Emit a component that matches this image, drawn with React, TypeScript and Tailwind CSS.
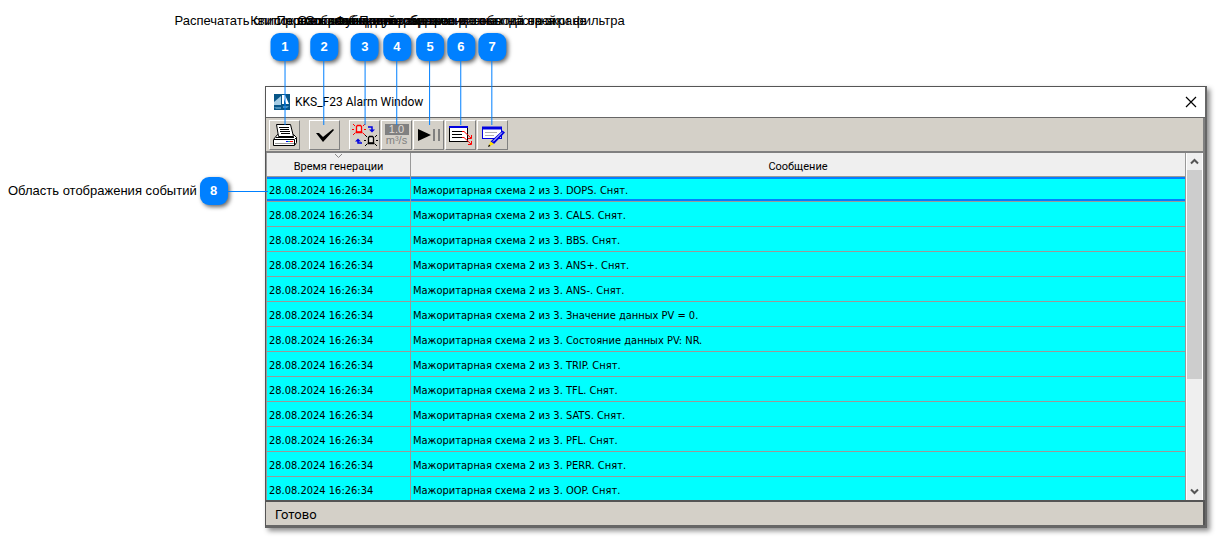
import type { ReactNode } from "react";

const messages = [
  "DOPS. Снят.",
  "CALS. Снят.",
  "BBS. Снят.",
  "ANS+. Снят.",
  "ANS-. Снят.",
  "Значение данных PV = 0.",
  "Состояние данных PV: NR.",
  "TRIP. Снят.",
  "TFL. Снят.",
  "SATS. Снят.",
  "PFL. Снят.",
  "PERR. Снят.",
  "OOP. Снят.",
];

const callouts = [
  { n: 1, place: "left-[285px]", text: "Распечатать список всех сообщений" },
  { n: 2, place: "left-[324px]", text: "Квитировать сообщение" },
  { n: 3, place: "left-[365px]", text: "Переключение звука сигнала" },
  { n: 4, place: "left-[397px]", text: "Отображение параметров в окне" },
  { n: 5, place: "left-[430px]", text: "Остановка и возобновление вывода окна" },
  { n: 6, place: "left-[461px]", text: "Функция отображения событий на экране" },
  { n: 7, place: "left-[492px]", text: "Подтверждение данных настройки фильтра" },
];

function Badge({ n }: { n: number }) {
  return (
    <span className="flex size-7 shrink-0 items-center justify-center rounded-[9px] bg-[#0080ff] text-[13px] font-bold text-white shadow-[2px_2px_4px_rgba(0,0,0,0.6)]">
      {n}
    </span>
  );
}

function ToolButton({ label, children }: { label: string; children: ReactNode }) {
  return (
    <button
      type="button"
      aria-label={label}
      className="flex h-[30px] w-[31px] items-center justify-center border border-t-white border-r-[#808080] border-b-[#808080] border-l-white bg-[#d4d0c8]"
    >
      {children}
    </button>
  );
}

function PrinterIcon() {
  return (
    <svg width="26" height="26" viewBox="0 0 26 26">
      <path d="M5.500 12.500L1.500 17.500V23.500H22.500L24.500 20.500V15.500L21.500 12.500Z" fill="#fff" stroke="#000" />
      <path d="M4.500 2.500H18.500L21.500 14.500H6.500Z" fill="#fff" stroke="#000" />
      <path d="M7 5.500H17M8 7.500H17M8 9.500H18M9 11.500H18" stroke="#000" />
      <path d="M2 17.500H22.500L24.500 15.500M22.500 18V23M4 15.500H22" stroke="#000" fill="none" />
      <path d="M3 21.500H22" stroke="#999" />
      <path d="M14 19.500H16" stroke="#0000ff" />
      <path d="M16 19.500H18" stroke="#00a0a0" />
      <path d="M18 19.500H21" stroke="#ff0000" />
    </svg>
  );
}

function CheckIcon() {
  return (
    <svg width="22" height="22" viewBox="0 0 22 22">
      <path d="M2 9L5 9L9 13L19 5L20 6L9 18Z" fill="#000" />
    </svg>
  );
}

function Beacon({ color }: { color: string }) {
  return (
    <g stroke={color} fill="none">
      <path d="M5.500 2.500H8.500L9.500 3.500V9H4.500V3.500Z" fill="#e4e0d8" strokeWidth="1.300" />
      <path d="M3.500 9.500H10.500" strokeWidth="1.500" />
      <path d="M0 6.500H2M12 6.500H14M1 1L3 3M13 1L11 3M1 12L3 10M13 12L11 10" />
    </g>
  );
}

function SwitchIcon() {
  return (
    <svg width="26" height="26" viewBox="0 0 26 26">
      <g transform="translate(0 1)"><Beacon color="#ff0000" /></g>
      <g transform="translate(12 12)"><Beacon color="#000000" /></g>
      <path d="M16 5H20V8" fill="none" stroke="#0000e0" strokeWidth="1.500" />
      <path d="M17 7.500H23L20 10.500Z" fill="#0000e0" />
      <path d="M10 21H6V19" fill="none" stroke="#0000e0" strokeWidth="1.500" />
      <path d="M3 19.500H9L6 16.500Z" fill="#0000e0" />
    </svg>
  );
}

function UnitsIcon() {
  return (
    <span className="flex w-6 flex-col items-center font-['Liberation_Sans',sans-serif] text-[11px] leading-[11px] text-[#808080]">
      <span className="w-full bg-[#808080] text-center text-[#e0ddd6]">1.0</span>
      <span>m³/s</span>
    </span>
  );
}

function PlayPauseIcon() {
  return (
    <svg width="26" height="22" viewBox="0 0 26 22">
      <path d="M2 5L15 11L2 17Z" fill="#000" />
      <path d="M18 5V17M23 5V17" stroke="#808080" strokeWidth="2" />
    </svg>
  );
}

function ListArrowsIcon() {
  return (
    <svg width="26" height="24" viewBox="0 0 26 24">
      <rect x="1.500" y="3.500" width="18" height="15" fill="#fff" stroke="#000" />
      <path d="M1 4H20" stroke="#0000e0" strokeWidth="2" />
      <path d="M4 8.500H14M4 11.500H14M4 14.500H14" stroke="#000" />
      <path d="M14 8.500H16L23 15M23.500 12V15.500H20M14 14.500H16L23 21M23.500 18V21.500H20" stroke="#ff0000" fill="none" />
    </svg>
  );
}

function EditIcon() {
  return (
    <svg width="26" height="24" viewBox="0 0 26 24">
      <rect x="2.500" y="4.500" width="19" height="11" fill="#fff" stroke="#0000e0" />
      <path d="M2 5H22" stroke="#0000e0" strokeWidth="3" />
      <path d="M5 9.500H17M5 12.500H14" stroke="#b0b0b0" />
      <path d="M22.500 7.500L25 9.500L14 21L10.500 18.500Z" fill="#0000e0" />
      <path d="M22 9.500L13 18.500" stroke="#fff" />
      <path d="M10.500 18.500L14 21L8.500 23.500Z" fill="#ffe000" />
      <path d="M8 24L9 21.500L10.500 23Z" fill="#000" />
    </svg>
  );
}

function Chevron({ up }: { up?: boolean }) {
  return (
    <svg width="9" height="7" viewBox="0 0 9 7">
      <path d={up ? "M1 5.500L4.500 2L8 5.500" : "M1 1.500L4.500 5L8 1.500"} fill="none" stroke="#555" strokeWidth="2" />
    </svg>
  );
}

export default function App() {
  return (
    <div className="relative min-h-screen overflow-hidden bg-white pt-[86px] pr-[9px] pb-2 pl-[265px] text-black">
      <main className="border border-[#555] border-r-2 border-b-[3px] border-r-[#666] border-b-[#666] bg-[#d4d0c8] font-[Roboto,sans-serif] shadow-[3px_3px_5px_rgba(0,0,0,0.45)]">
        <header className="flex h-[31px] items-center border-b border-[#666] bg-white px-2">
          <svg width="16" height="16" viewBox="0 0 16 16">
            <rect width="16" height="16" fill="#075587" />
            <path d="M0 11V8L7 2V11Z" fill="#a5cce4" />
            <path d="M8 1H11L15 10H12L10 5V10H8Z" fill="#fff" />
            <path d="M0 13H7V15H2ZM9 12H15L13 14H9Z" fill="#4d91bc" />
          </svg>
          <h1 className="ml-[5px] grow text-[12px] leading-4">KKS_F23 Alarm Window</h1>
          <button type="button" aria-label="Закрыть">
            <svg width="12" height="12" viewBox="0 0 12 12">
              <path d="M1 1L11 11M11 1L1 11" stroke="#000" strokeWidth="1.200" />
            </svg>
          </button>
        </header>

        <div className="flex h-[35px] items-center gap-[9px] border-r-2 border-b-2 border-[#808080] pl-[3px]">
          <ToolButton label="Печать"><PrinterIcon /></ToolButton>
          <ToolButton label="Квитировать"><CheckIcon /></ToolButton>
          <div className="flex gap-px">
            <ToolButton label="Переключить"><SwitchIcon /></ToolButton>
            <ToolButton label="Значения"><UnitsIcon /></ToolButton>
            <ToolButton label="Пауза"><PlayPauseIcon /></ToolButton>
            <ToolButton label="Список"><ListArrowsIcon /></ToolButton>
            <ToolButton label="Фильтр"><EditIcon /></ToolButton>
          </div>
        </div>

        <div className="flex h-[347px] overflow-hidden border-r-2 border-l border-r-[#808080] border-l-[#999]">
          <div className="grow overflow-hidden">
            <table className="w-full table-fixed border-separate border-spacing-0 text-left font-['DejaVu_Sans_Condensed','DejaVu_Sans',sans-serif] text-[11px] leading-4">
              <colgroup>
                <col className="w-36" />
                <col />
              </colgroup>
              <thead>
                <tr className="h-6 bg-[#efefef] text-center font-[Roboto,sans-serif]">
                  <th className="relative border-r border-b border-[#999] p-0 pt-[5px] font-normal">
                    <svg className="absolute top-0 left-[67px]" width="9" height="6" viewBox="0 0 9 6">
                      <path d="M1 1L4.500 4.500L8 1" fill="none" stroke="#888" />
                    </svg>
                    Время генерации
                  </th>
                  <th className="border-r border-b border-[#999] p-0 pt-[5px] font-normal">Сообщение</th>
                </tr>
              </thead>
              <tbody>
                {messages.map((m, i) => {
                  const mark = i === 0 ? "shadow-[inset_0_2px_0_#0080ff,inset_0_-2px_0_#0080ff]" : "";
                  return (
                    <tr key={m} className="h-[25px] bg-[#00ffff]">
                      <td className={`border-r border-b border-[#9a9a9a] p-0 pt-[3px] pl-[2px] whitespace-nowrap ${mark}`}>28.08.2024 16:26:34</td>
                      <td className={`border-r border-b border-[#9a9a9a] p-0 pt-[3px] pl-[2px] whitespace-nowrap ${mark}`}>Мажоритарная схема 2 из 3. {m}</td>
                    </tr>
                  );
                })}
              </tbody>
            </table>
          </div>
          <div className="flex w-[17px] shrink-0 flex-col items-center border-x border-white bg-[#efefef]">
            <span className="flex h-[17px] items-center"><Chevron up /></span>
            <span className="h-[209px] w-full bg-[#cdcdcd]" />
            <span className="mt-auto flex h-[18px] items-center"><Chevron /></span>
          </div>
        </div>

        <footer className="h-[25px] border-t-2 border-r-2 border-[#555] pl-[9px] text-[13px] leading-[25px]">Готово</footer>
      </main>

      <div className="font-['Liberation_Sans',sans-serif] text-[13px] leading-4">
        {callouts.map((c) => (
          <div key={c.n} className={`pointer-events-none absolute top-[13px] flex -translate-x-1/2 flex-col items-center ${c.place}`}>
            <span className="mb-1 whitespace-nowrap">{c.text}</span>
            <Badge n={c.n} />
            <span className="h-16 w-px bg-[#0080ff]" />
          </div>
        ))}
        <div className="pointer-events-none absolute top-[177px] left-2 flex items-center gap-[3px]">
          <span className="whitespace-nowrap">Область отображения событий</span>
          <div className="flex items-center">
            <Badge n={8} />
            <span className="h-px w-10 bg-[#0080ff]" />
          </div>
        </div>
      </div>
    </div>
  );
}
